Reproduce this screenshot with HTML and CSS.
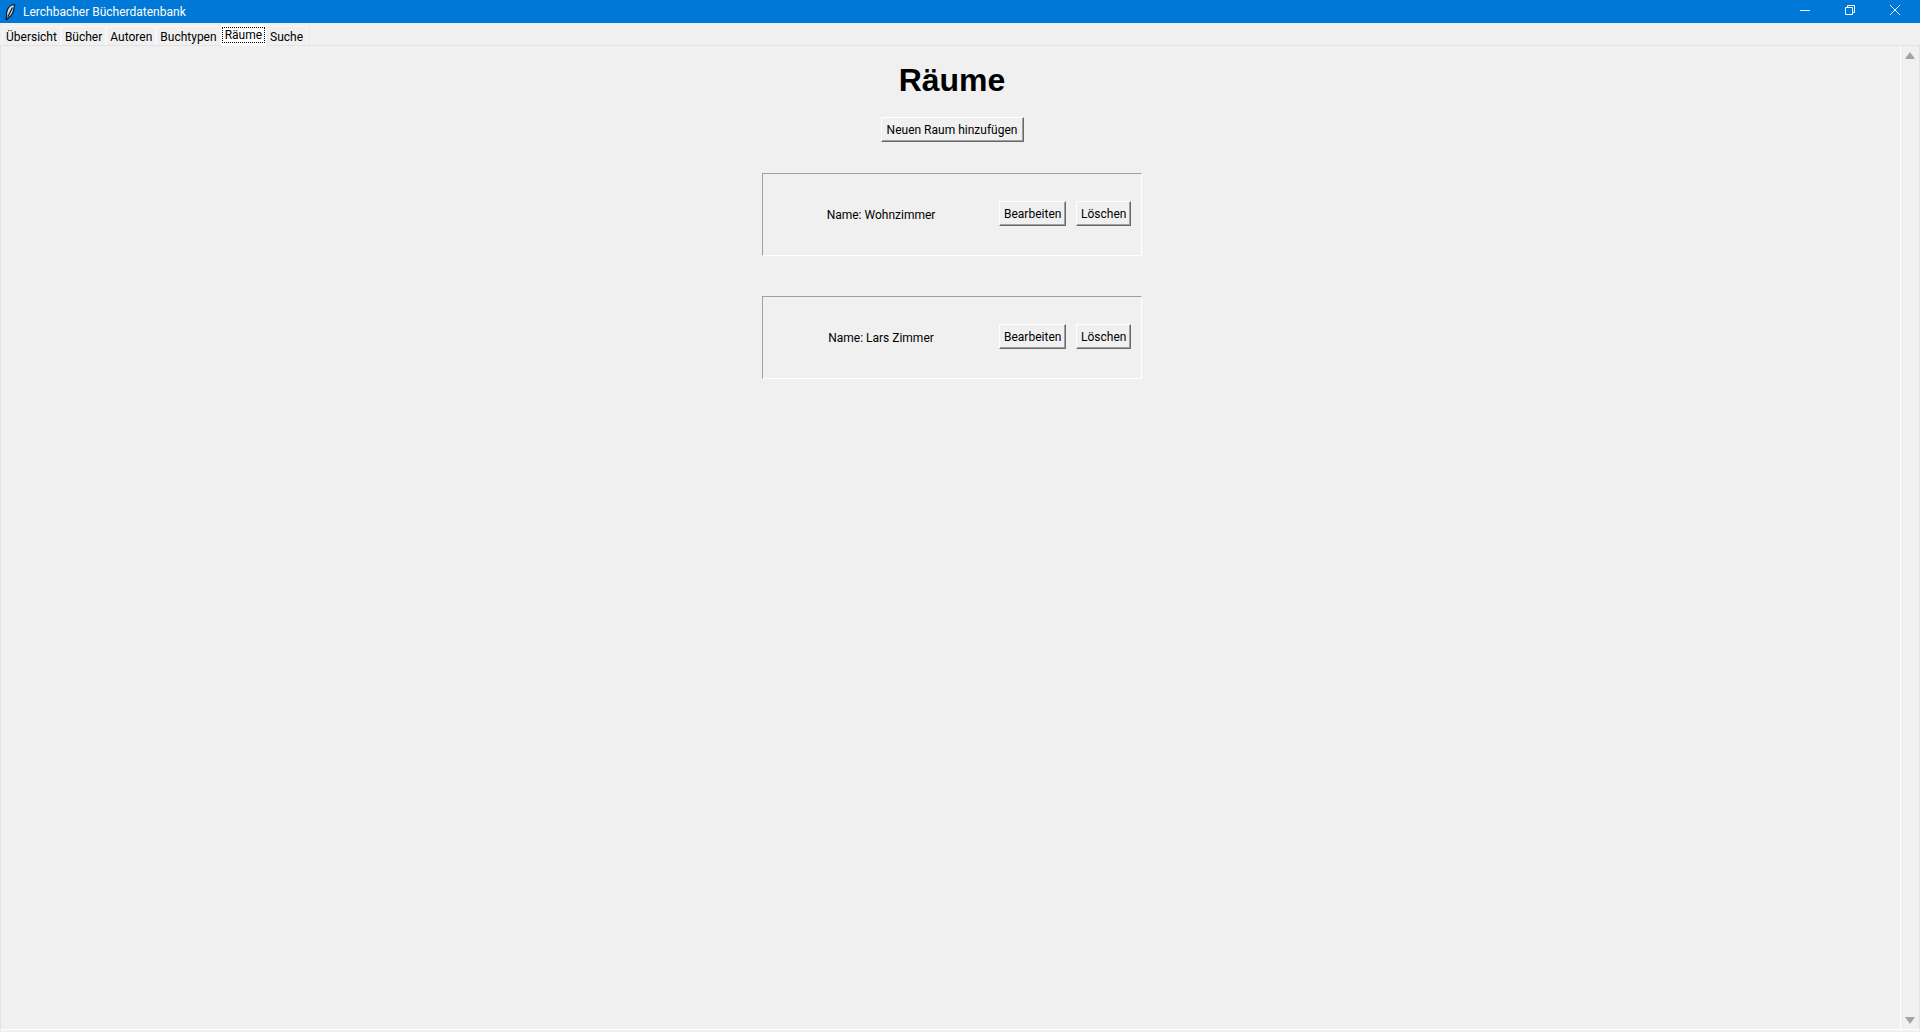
FILE: index.html
```html
<!DOCTYPE html>
<html>

<head>
    <meta charset="utf-8" />
    <title>Lerchbacher Bücherdatenbank</title>
    <link rel="stylesheet" href="styles.css">
</head>

<body>
    <div class="titleBar">
        <svg class="feather" width="14" height="18" viewBox="0 0 14 18">
            <path d="M11.500 1.500C8 1.500 5 4.500 4 8C3.300 10.500 3.300 12 3.800 13.500L3 16.500L4.500 16.500L5.200 14.500C8.500 13.500 11 8 11.500 1.500Z" fill="#cfe0f0" stroke="#0a1420" stroke-width="1.200" />
            <path d="M9.500 4.500L5 13.500" stroke="#0a1420" stroke-width="1.200" fill="none" />
        </svg>
        <span class="titleText">Lerchbacher Bücherdatenbank</span>
        <div class="winBtns">
            <svg class="winIcon" width="12" height="12" viewBox="0 0 12 12">
                <path d="M1 6.500H11" stroke="#fff" stroke-width="1" fill="none" />
            </svg>
            <svg class="winIcon" width="12" height="12" viewBox="0 0 12 12">
                <path d="M1.500 3.500H8.500V10.500H1.500Z M3.500 3.500V1.500H10.500V8.500H8.500" stroke="#fff" stroke-width="1" fill="none" />
            </svg>
            <svg class="winIcon" width="12" height="12" viewBox="0 0 12 12">
                <path d="M1 1L11 11M11 1L1 11" stroke="#fff" stroke-width="1" fill="none" />
            </svg>
        </div>
    </div>

    <div class="tabs">
        <div class="tab">Übersicht</div>
        <div class="tab">Bücher</div>
        <div class="tab">Autoren</div>
        <div class="tab">Buchtypen</div>
        <div class="tab active"><span class="focusBox">Räume</span></div>
        <div class="tab">Suche</div>
    </div>

    <div class="panel">
        <div class="content">
            <h1>Räume</h1>
            <button class="btn addBtn">Neuen Raum hinzufügen</button>

            <div class="card">
                <div class="cardName">Name: Wohnzimmer</div>
                <button class="btn editBtn">Bearbeiten</button>
                <button class="btn delBtn">Löschen</button>
            </div>

            <div class="card">
                <div class="cardName">Name: Lars Zimmer</div>
                <button class="btn editBtn">Bearbeiten</button>
                <button class="btn delBtn">Löschen</button>
            </div>
        </div>

        <div class="scrollBar">
            <div class="arrowUp"></div>
            <div class="arrowDown"></div>
        </div>
    </div>
</body>

</html>
```

FILE: styles.css
```css
* {
    box-sizing: border-box;
}

html,
body {
    height: 100%;
}

body {
    margin: 0px;
    display: flex;
    flex-direction: column;
    background-color: #f0f0f0;
    color: #000;
    font-family: Roboto, "Noto Sans", sans-serif;
    font-size: 12px;
    overflow: hidden;
}

.titleBar {
    height: 23px;
    flex: none;
    display: flex;
    align-items: center;
    padding-left: 3px;
    background-color: #0078d7;
    color: #fff;
}

.feather {
    flex: none;
}

.titleText {
    margin-left: 6px;
}

.winBtns {
    margin-left: auto;
    display: flex;
    gap: 33px;
    padding-right: 19px;
    margin-top: -4px;
}

.tabs {
    height: 23px;
    flex: none;
    display: flex;
    align-items: flex-end;
    padding-left: 2px;
    border-bottom: 1px solid #e3e3e3;
}

.tab {
    height: 19px;
    padding: 1px 3px 0px 3px;
    display: flex;
    align-items: center;
    white-space: nowrap;
    background-color: #f0f0f0;
    border: 1px solid #f7f7f7;
    border-bottom: none;
}

.tab.active {
    height: 22px;
    margin-bottom: -1px;
    padding: 0px 1px;
    background-color: #fff;
    border: none;
}

.focusBox {
    border: 1px dotted #000;
    padding: 0px 2px;
    line-height: 14px;
    margin-top: -1px;
}

.panel {
    flex: 1;
    display: flex;
    margin-bottom: 2px;
    border-left: 1px solid #e3e3e3;
    border-right: 1px solid #e3e3e3;
    border-bottom: 1px solid #fff;
}

.content {
    flex: 1;
    display: flex;
    flex-direction: column;
    align-items: center;
    padding-left: 3px;
}

h1 {
    margin: 14px 0px 0px 0px;
    height: 43px;
    font-family: "Liberation Sans", Arial, sans-serif;
    font-size: 32px;
    line-height: 40px;
    font-weight: bold;
}

.btn {
    height: 25px;
    padding: 0px 4px;
    font-family: inherit;
    font-size: 12px;
    color: #000;
    background-color: #f0f0f0;
    border: 1px solid #fff;
    border-right-color: #696969;
    border-bottom-color: #696969;
    box-shadow: inset -1px -1px 0px #a0a0a0;
    white-space: nowrap;
}

.addBtn {
    width: 143px;
    margin-top: 14px;
}

.card {
    width: 380px;
    height: 83px;
    margin-top: 40px;
    display: flex;
    align-items: center;
    flex: none;
    border: 1px solid #fff;
    border-top-color: #a0a0a0;
    border-left-color: #a0a0a0;
}

.addBtn+.card {
    margin-top: 31px;
}

.cardName {
    width: 236px;
    margin-top: 1px;
    text-align: center;
}

.editBtn {
    width: 67px;
    margin-top: -2px;
}

.delBtn {
    width: 55px;
    margin-top: -2px;
    margin-left: 10px;
}

.scrollBar {
    width: 19px;
    flex: none;
    display: flex;
    flex-direction: column;
    justify-content: space-between;
    align-items: center;
    padding: 6px 1px 5px 0px;
    border-left: 1px solid #fff;
}

.arrowUp {
    width: 0px;
    height: 0px;
    border-left: 5px solid transparent;
    border-right: 5px solid transparent;
    border-bottom: 7px solid #a3a3a3;
}

.arrowDown {
    width: 0px;
    height: 0px;
    border-left: 5px solid transparent;
    border-right: 5px solid transparent;
    border-top: 7px solid #a3a3a3;
}
```
